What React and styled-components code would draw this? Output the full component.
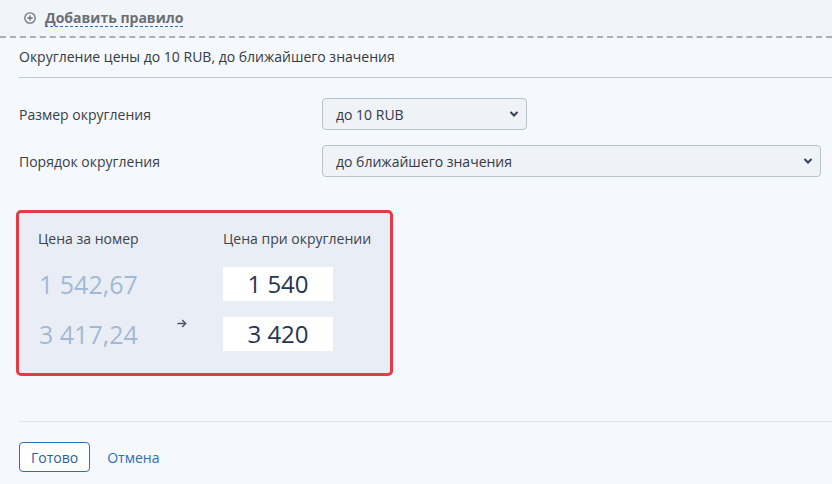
import React, { useState } from "react";
import styled, { createGlobalStyle } from "styled-components";

const GlobalStyle = createGlobalStyle`
  html, body {
    margin: 0;
    padding: 0;
    background: #f5f8fc;
    font-family: "Open Sans", "Noto Sans", sans-serif;
    color: #2e3a4b;
  }
  * { box-sizing: border-box; }
`;

const Page = styled.div`
  width: 832px;
  min-height: 484px;
  background: #f5f8fc;
`;

const AddBar = styled.div`
  height: 38px;
  display: flex;
  align-items: center;
  padding-left: 24px;
  gap: 9px;
  background: #f1f4f9;
  border-bottom: 2px dashed #abaeb3;
`;

const AddLink = styled.a`
  font-size: 14px;
  font-weight: 700;
  color: #6b6e73;
  text-decoration: none;
  border-bottom: 1px dashed #2a6ebb;
  line-height: 16px;
  margin-top: 1px;
`;

const Body = styled.div`
  padding-left: 19px;
`;

const Summary = styled.div`
  font-size: 14px;
  color: #343a44;
  padding: 9px 0 10px;
  line-height: 20px;
  border-bottom: 1px solid #b5c8dc;
`;

const Form = styled.div`
  display: grid;
  grid-template-columns: 303px 1fr;
  row-gap: 15px;
  align-items: center;
  padding: 20px 11px 0 0;
`;

const Label = styled.div`
  font-size: 14px;
  color: #3a3f47;
`;

const SelectBox = styled.div`
  position: relative;
  width: ${(p) => p.$width || "100%"};
  height: 32px;
  border: 1px solid #b7c2cf;
  border-radius: 4px;
  background: #eff2f6;
  display: flex;
  align-items: center;
  padding-left: 13px;
  font-size: 14px;
  color: #333a45;
`;

const Chevron = styled.svg`
  position: absolute;
  right: 7px;
  top: 11px;
`;

const Preview = styled.div`
  margin: 33px 0 0 -3px;
  width: 377px;
  border: 3px solid #e63b43;
  border-radius: 5px;
  background: #e9eef6;
  display: grid;
  grid-template-columns: 139px 46px 1fr;
  grid-template-rows: auto 34px 34px;
  row-gap: 16px;
  padding: 16px 0 22px 19px;
`;

const ColHead = styled.div`
  font-size: 14px;
  color: #3d434c;
  line-height: 20px;
  margin-bottom: 2px;
  grid-column: ${(p) => p.$col};
`;

const OldPrice = styled.div`
  grid-column: 1;
  padding-left: 1px;
  font-size: 25px;
  color: #a3b9d3;
  line-height: 34px;
  white-space: nowrap;
`;

const NewPrice = styled.div`
  grid-column: 3;
  width: 110px;
  height: 34px;
  background: #fff;
  font-size: 24px;
  color: #24364f;
  line-height: 34px;
  text-align: center;
`;

const ArrowCell = styled.div`
  grid-column: 2;
  grid-row: 2 / 4;
  padding-top: 44px;
`;

const Footer = styled.div`
  margin-top: 45px;
  border-top: 1px solid #dfe6f0;
  display: flex;
  align-items: center;
  gap: 17px;
  padding-top: 20px;
`;

const DoneButton = styled.button`
  height: 30px;
  padding: 0 11px;
  border: 1px solid #2a6ebb;
  border-radius: 4px;
  background: #fff;
  color: #2b5fa0;
  font-family: inherit;
  font-size: 14px;
`;

const CancelLink = styled.a`
  color: #2a6ebb;
  font-size: 14px;
  text-decoration: none;
`;

const ChevronIcon = () => (
  <Chevron width="10" height="8" viewBox="0 0 10 8">
    <path d="M1.5 2 L5 5.5 L8.5 2" fill="none" stroke="#33405a" strokeWidth="2" />
  </Chevron>
);

const rows = [
  { from: "1 542,67", to: "1 540" },
  { from: "3 417,24", to: "3 420" },
];

export default function App() {
  const [size] = useState("до 10 RUB");
  const [order] = useState("до ближайшего значения");

  return (
    <Page>
      <GlobalStyle />
      <AddBar>
        <svg width="12" height="12" viewBox="0 0 12 12">
          <circle cx="6" cy="6" r="5.2" fill="none" stroke="#6e7176" strokeWidth="1.3" />
          <path d="M6 3.3 V8.7 M3.3 6 H8.7" stroke="#6e7176" strokeWidth="1.3" />
        </svg>
        <AddLink href="#">Добавить правило</AddLink>
      </AddBar>
      <Body>
        <Summary>Округление цены до 10 RUB, до ближайшего значения</Summary>
        <Form>
          <Label>Размер округления</Label>
          <SelectBox $width="205px">
            {size}
            <ChevronIcon />
          </SelectBox>
          <Label>Порядок округления</Label>
          <SelectBox>
            {order}
            <ChevronIcon />
          </SelectBox>
        </Form>
        <Preview>
          <ColHead $col="1">Цена за номер</ColHead>
          <ColHead $col="3">Цена при округлении</ColHead>
          {rows.map((r) => (
            <React.Fragment key={r.from}>
              <OldPrice>{r.from}</OldPrice>
              <NewPrice>{r.to}</NewPrice>
            </React.Fragment>
          ))}
          <ArrowCell>
            <svg width="10" height="9" viewBox="0 0 10 9">
              <path d="M0.5 4.5 H8.5 M5.2 1 L8.7 4.5 L5.2 8" fill="none" stroke="#4a5568" strokeWidth="1.4" />
            </svg>
          </ArrowCell>
        </Preview>
        <Footer>
          <DoneButton>Готово</DoneButton>
          <CancelLink href="#">Отмена</CancelLink>
        </Footer>
      </Body>
    </Page>
  );
}
